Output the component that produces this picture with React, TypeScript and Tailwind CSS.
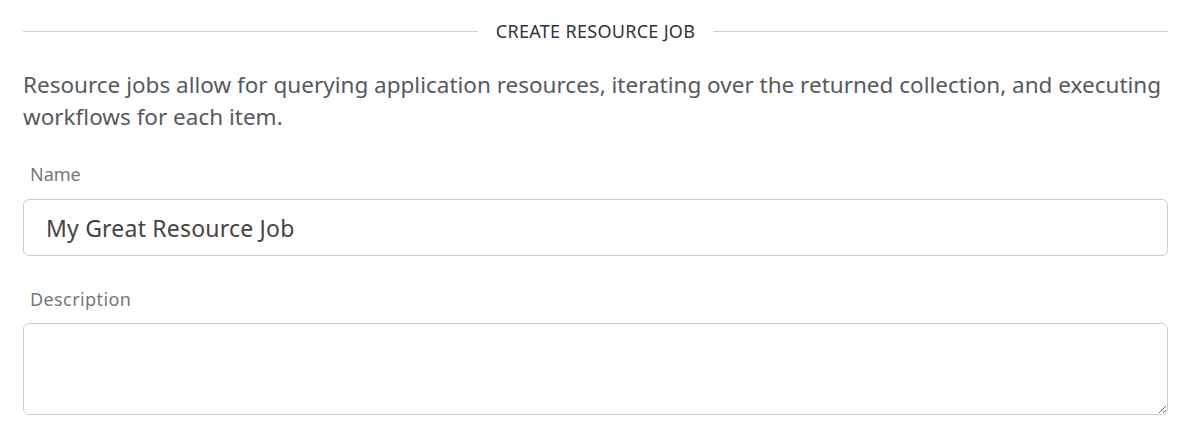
import React from 'react';

export default function App() {
  return (
    <div className="bg-white pl-[23px] pr-[32px] pt-[20px] pb-8 font-['Noto_Sans',sans-serif]">
      {/* -- Heading -- */}
      <div className="flex items-center gap-[18px]">
        <div className="flex-1 h-px bg-[#d1d1d1]" />
        <h2 className="text-[18px] leading-[22px] text-[#2d3440] uppercase tracking-[0.3px]">Create Resource Job</h2>
        <div className="flex-1 h-px bg-[#d1d1d1]" />
      </div>

      {/* -- Intro -- */}
      <p className="mt-[27px] text-[22.5px] leading-[32px] text-[#555a60]">
        Resource jobs allow for querying application resources, iterating over the returned collection, and executing workflows for each item.
      </p>

      {/* -- Name -- */}
      <label className="block mt-[30px] pl-[7px] text-[18px] leading-[22px] text-[#72777f]">Name</label>
      <input
        type="text"
        defaultValue="My Great Resource Job"
        className="mt-[14px] block w-full h-[57px] px-[22px] rounded-[6px] border border-[#cccccc] text-[23px] text-[#444444] tracking-[0.2px] outline-none"
      />

      {/* -- Description field -- */}
      <label className="block mt-[32px] pl-[7px] text-[18px] leading-[22px] text-[#72777f] tracking-[0.4px]">Description</label>
      <textarea
        className="mt-[13px] block w-full h-[92px] px-[22px] py-3 rounded-[6px] border border-[#cccccc] text-[20px] text-[#444444] outline-none"
      />
    </div>
  );
}
